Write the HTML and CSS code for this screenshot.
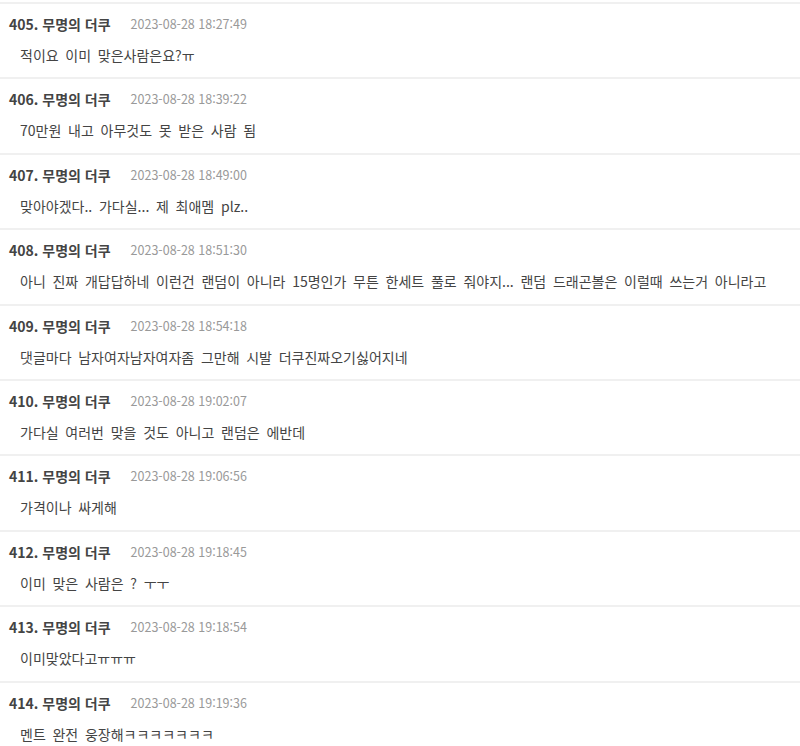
FILE: index.html
```html
<!DOCTYPE html>
<html lang="ko">

<head>
    <meta charset="UTF-8">
    <meta name="viewport" content="width=device-width, initial-scale=1.0">
    <title>댓글</title>
    <link rel="stylesheet" href="styles.css">
</head>

<body>

    <ul class="comments">
        <li class="comment">
            <div class="comment-head"><span class="nick">405. 무명의 더쿠</span><span class="date">2023-08-28 18:27:49</span></div>
            <p class="comment-text">적이요 이미 맞은사람은요?ㅠ</p>
        </li>
        <li class="comment">
            <div class="comment-head"><span class="nick">406. 무명의 더쿠</span><span class="date">2023-08-28 18:39:22</span></div>
            <p class="comment-text">70만원 내고 아무것도 못 받은 사람 됨</p>
        </li>
        <li class="comment">
            <div class="comment-head"><span class="nick">407. 무명의 더쿠</span><span class="date">2023-08-28 18:49:00</span></div>
            <p class="comment-text">맞아야겠다.. 가다실... 제 최애멤 plz..</p>
        </li>
        <li class="comment">
            <div class="comment-head"><span class="nick">408. 무명의 더쿠</span><span class="date">2023-08-28 18:51:30</span></div>
            <p class="comment-text">아니 진짜 개답답하네 이런건 랜덤이 아니라 15명인가 무튼 한세트 풀로 줘야지... 랜덤 드래곤볼은 이럴때 쓰는거 아니라고</p>
        </li>
        <li class="comment">
            <div class="comment-head"><span class="nick">409. 무명의 더쿠</span><span class="date">2023-08-28 18:54:18</span></div>
            <p class="comment-text">댓글마다 남자여자남자여자좀 그만해 시발 더쿠진짜오기싫어지네</p>
        </li>
        <li class="comment">
            <div class="comment-head"><span class="nick">410. 무명의 더쿠</span><span class="date">2023-08-28 19:02:07</span></div>
            <p class="comment-text">가다실 여러번 맞을 것도 아니고 랜덤은 에반데</p>
        </li>
        <li class="comment">
            <div class="comment-head"><span class="nick">411. 무명의 더쿠</span><span class="date">2023-08-28 19:06:56</span></div>
            <p class="comment-text">가격이나 싸게해</p>
        </li>
        <li class="comment">
            <div class="comment-head"><span class="nick">412. 무명의 더쿠</span><span class="date">2023-08-28 19:18:45</span></div>
            <p class="comment-text">이미 맞은 사람은 ? ㅜㅜ</p>
        </li>
        <li class="comment">
            <div class="comment-head"><span class="nick">413. 무명의 더쿠</span><span class="date">2023-08-28 19:18:54</span></div>
            <p class="comment-text">이미맞았다고ㅠㅠㅠ</p>
        </li>
        <li class="comment">
            <div class="comment-head"><span class="nick">414. 무명의 더쿠</span><span class="date">2023-08-28 19:19:36</span></div>
            <p class="comment-text">멘트 완전 웅장해ㅋㅋㅋㅋㅋㅋㅋ</p>
        </li>
    </ul>

</body>

</html>
```

FILE: styles.css
```css
body {
    margin: 0;
    padding: 0;
    background-color: #fff;
    color: #333;
    font-family: "Noto Sans CJK KR", "Noto Sans", sans-serif;
}

.comments {
    list-style: none;
    margin: 0;
    padding: 2px 0 0 0;
}

.comment {
    border-top: 2px solid #f0f0f0;
    padding: 10px 9px 12.4px 9px;
}

.comment-head {
    display: flex;
    align-items: center;
    gap: 20px;
    height: 20px;
    line-height: 20px;
}

.nick {
    font-size: 14px;
    font-weight: bold;
    color: #444;
}

.date {
    font-size: 12.5px;
    color: #999;
}

.comment-text {
    margin: 11px 0 0 11px;
    height: 20px;
    font-size: 14px;
    line-height: 20px;
    word-spacing: 2.8px;
    color: #444;
    white-space: nowrap;
}
```
